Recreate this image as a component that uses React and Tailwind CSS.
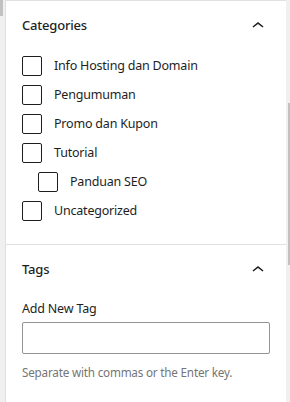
import React from "react";

const font = { fontFamily: '"Noto Sans", "Open Sans", sans-serif' };

function Chevron() {
  return (
    <svg width="24" height="24" viewBox="0 0 24 24" className="shrink-0">
      <path d="M6.5 12.4L12 8l5.5 4.4-.9 1.2L12 10l-4.6 3.6-1-1.2z" fill="#1e1e1e" />
    </svg>
  );
}

function Check({ label, nested }) {
  return (
    <div className={"flex items-center h-[20px] gap-[12px] " + (nested ? "pl-[16px]" : "")}>
      <div className="w-[20px] h-[20px] border border-[#1e1e1e] rounded-[2px] bg-white shrink-0" />
      <span className="text-[12.5px] tracking-[-0.2px] text-[#1e1e1e] leading-[20px]">{label}</span>
    </div>
  );
}

export default function App() {
  return (
    <div className="w-[290px] h-[402px] flex bg-white overflow-hidden" style={font}>
      <div className="w-[5px] h-full bg-[#f0f0f0] flex flex-col shrink-0">
        <div className="w-[3px] h-[16px] bg-[#c1c1c1]" />
      </div>
      <div className="flex-1 border-l border-t border-[#e0e0e0] bg-white flex flex-col">
        <div>
          <div className="h-[50px] px-[16px] flex items-center justify-between">
            <span className="text-[13px] tracking-[-0.2px] font-medium text-[#1e1e1e]">Categories</span>
            <Chevron />
          </div>
          <div className="px-[16px] pt-[5px] pb-[23px] flex flex-col gap-[9px]">
            <Check label="Info Hosting dan Domain" />
            <Check label="Pengumuman" />
            <Check label="Promo dan Kupon" />
            <Check label="Tutorial" />
            <Check label="Panduan SEO" nested />
            <Check label="Uncategorized" />
          </div>
        </div>
        <div className="border-t border-[#e0e0e0]">
          <div className="h-[50px] px-[16px] flex items-center justify-between">
            <span className="text-[13px] tracking-[-0.2px] font-medium text-[#1e1e1e]">Tags</span>
            <Chevron />
          </div>
          <div className="px-[16px] pt-[4px] flex flex-col">
            <label className="text-[12.5px] tracking-[-0.2px] text-[#1e1e1e] leading-[20px]">Add New Tag</label>
            <div className="mt-[3px] h-[32px] w-full border border-[#949494] rounded-[2px] bg-white" />
            <p className="mt-[9px] text-[11.7px] tracking-[-0.2px] leading-[18px] text-[#757575]">Separate with commas or the Enter key.</p>
          </div>
        </div>
      </div>
      <div className="w-[4px] h-full bg-[#f0f0f0] flex flex-col items-end shrink-0">
        <div className="mt-[103px] w-[2px] h-[162px] bg-[#c1c1c1]" />
      </div>
    </div>
  );
}
